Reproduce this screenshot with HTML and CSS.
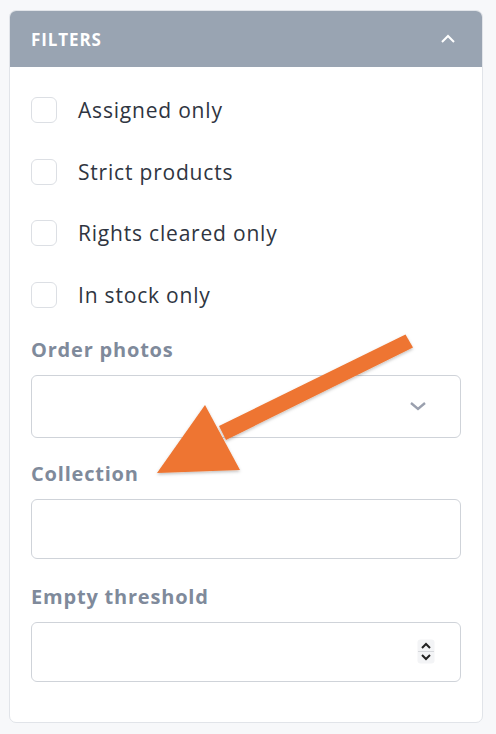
FILE: index.html
```html
<!DOCTYPE html>
<html>
<head>
<meta charset="utf-8">
<link rel="stylesheet" href="styles.css">
</head>
<body>
<div class="page">
  <div class="card">
    <div class="card-header">
      <span class="title">FILTERS</span>
      <svg class="chev-up" width="16" height="10" viewBox="0 0 16 10"><path d="M2 8 L8 2 L14 8" fill="none" stroke="#fff" stroke-width="2"/></svg>
    </div>
    <div class="card-body">
      <div class="checks">
        <label class="check"><span class="box"></span><span class="check-text">Assigned only</span></label>
        <label class="check"><span class="box"></span><span class="check-text">Strict products</span></label>
        <label class="check"><span class="box"></span><span class="check-text">Rights cleared only</span></label>
        <label class="check"><span class="box"></span><span class="check-text">In stock only</span></label>
      </div>
      <div class="field field-order">
        <div class="field-label">Order photos</div>
        <div class="control select">
          <svg class="chev-down" width="18" height="10" viewBox="0 0 18 10"><path d="M2 2 L9 8 L16 2" fill="none" stroke="#9aa0ae" stroke-width="2.4"/></svg>
        </div>
      </div>
      <div class="field field-collection">
        <div class="field-label">Collection</div>
        <div class="control input"></div>
      </div>
      <div class="field field-threshold">
        <div class="field-label">Empty threshold</div>
        <div class="control input number">
          <svg class="spinner" width="18" height="25" viewBox="0 0 18 25">
            <rect x="0.5" y="0.5" width="17" height="24" rx="3" fill="#f3f4f6"/>
            <line x1="1" y1="12.5" x2="17" y2="12.5" stroke="#d6d8dc" stroke-width="1"/>
            <path d="M5 9 L9 5 L13 9" fill="none" stroke="#222" stroke-width="2"/>
            <path d="M5 16 L9 20 L13 16" fill="none" stroke="#222" stroke-width="2"/>
          </svg>
        </div>
      </div>
    </div>
  </div>
  <svg class="arrow" width="496" height="734" viewBox="0 0 496 734">
    <defs>
      <filter id="sh" x="-20%" y="-20%" width="140%" height="140%">
        <feDropShadow dx="0" dy="1.5" stdDeviation="1.5" flood-color="#000" flood-opacity="0.25"/>
      </filter>
    </defs>
    <g filter="url(#sh)">
      <polygon points="405.5,334.5 413,347.5 226,440 219,426" fill="#ee7430"/>
      <polygon points="205,405 240,470 157,473" fill="#ee7430"/>
    </g>
  </svg>
</div>
</body>
</html>
```

FILE: styles.css
```css
html, body {
  margin: 0;
  padding: 0;
}
body {
  background: #f7f8fa;
  font-family: "Open Sans", "Liberation Sans", sans-serif;
  width: 496px;
  height: 734px;
  overflow: hidden;
}
.page {
  position: relative;
  width: 496px;
  height: 734px;
  padding: 10px 0 0 9px;
  box-sizing: border-box;
}
.card {
  width: 474px;
  box-sizing: border-box;
  background: #fff;
  border: 1px solid #e1e4e9;
  border-radius: 7px;
  overflow: hidden;
}
.card-header {
  height: 56px;
  background: #99a4b2;
  display: flex;
  align-items: center;
  justify-content: space-between;
  padding: 0 26px 0 21px;
}
.title {
  color: #fff;
  font-weight: 700;
  font-size: 17px;
  letter-spacing: 0.9px;
}
.chev-up {
  display: block;
}
.card-body {
  padding: 30px 21px 40px 21px;
}
.checks {
  display: flex;
  flex-direction: column;
  gap: 35.5px;
}
.check {
  display: flex;
  align-items: center;
  gap: 21px;
  height: 26px;
}
.box {
  width: 26px;
  height: 26px;
  box-sizing: border-box;
  border: 1.5px solid #dcdfe4;
  border-radius: 6px;
  background: #fff;
  flex: none;
}
.check-text {
  font-size: 21px;
  letter-spacing: 0.8px;
  color: #2f3541;
}
.field {
  display: flex;
  flex-direction: column;
}
.field-order {
  margin-top: 28px;
}
.field-collection {
  margin-top: 22px;
}
.field-threshold {
  margin-top: 24px;
}
.field-label {
  font-size: 20px;
  font-weight: 700;
  letter-spacing: 0.8px;
  color: #7f8a9b;
  line-height: 28px;
  margin-bottom: 11px;
}
.control {
  width: 430px;
  height: 60px;
  box-sizing: border-box;
  border: 1.5px solid #cfd3d9;
  border-radius: 6px;
  display: flex;
  align-items: center;
  justify-content: flex-end;
}
.select {
  height: 63px;
  padding-right: 33px;
}
.number {
  padding-right: 25px;
}
.chev-down, .spinner {
  display: block;
}
.arrow {
  position: absolute;
  left: 0;
  top: 0;
  pointer-events: none;
}
```
